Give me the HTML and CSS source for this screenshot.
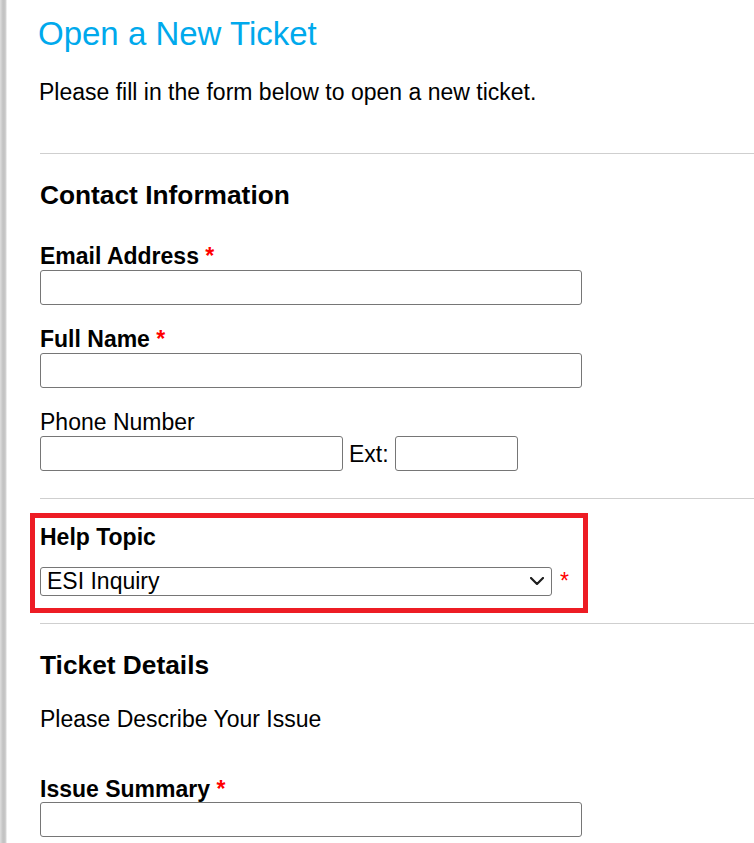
FILE: index.html
```html
<!DOCTYPE html>
<html lang="en">
<head>
<meta charset="utf-8">
<title>Open a New Ticket</title>
<link rel="stylesheet" href="styles.css">
</head>
<body>
<main class="page">
  <h1 class="title">Open a New Ticket</h1>
  <p class="intro">Please fill in the form below to open a new ticket.</p>
  <hr class="rule rule-first">

  <h3 class="section-title">Contact Information</h3>
  <div class="fields">
    <div class="field">
      <label class="label label-bold" for="email">Email Address <span class="req">*</span></label>
      <input class="input input-wide" id="email" type="text">
    </div>
    <div class="field">
      <label class="label label-bold" for="name">Full Name <span class="req">*</span></label>
      <input class="input input-wide" id="name" type="text">
    </div>
    <div class="field">
      <label class="label" for="phone">Phone Number</label>
      <div class="phone-row">
        <input class="input input-phone" id="phone" type="text">
        <label class="label ext-label" for="ext">Ext:</label>
        <input class="input input-ext" id="ext" type="text">
      </div>
    </div>
  </div>

  <hr class="rule rule-mid">

  <div class="topic-box">
    <label class="label label-bold topic-label" for="topic">Help Topic</label>
    <div class="topic-row">
      <div class="select-wrap">
        <select class="select" id="topic">
          <option>ESI Inquiry</option>
        </select>
        <svg class="chevron" width="14" height="8" viewBox="0 0 14 8" aria-hidden="true">
          <polyline points="1,1 7,7 13,1" fill="none" stroke="#1e1e1e" stroke-width="2.2" stroke-linecap="round" stroke-linejoin="round"/>
        </svg>
      </div>
      <span class="req req-select">*</span>
    </div>
  </div>

  <hr class="rule rule-after-topic">

  <h3 class="section-title section-details">Ticket Details</h3>
  <p class="describe">Please Describe Your Issue</p>

  <div class="field field-summary">
    <label class="label label-bold" for="summary">Issue Summary <span class="req">*</span></label>
    <input class="input input-wide" id="summary" type="text">
  </div>
</main>
</body>
</html>
```

FILE: styles.css
```css
html, body {
  margin: 0;
  padding: 0;
}

body {
  font-family: "Liberation Sans", Arial, sans-serif;
  font-size: 23px;
  color: #000;
  background-color: #fff;
  background-image: linear-gradient(to right, #dedede 0, #c2c2c2 3px, #c6c6c6 5px, #d8d8d8 6px, #fff 7px);
  background-repeat: no-repeat;
  background-size: 7px 100%;
  min-height: 100vh;
  overflow: hidden;
}

.page {
  padding: 15px 0 0 40px;
}

.title {
  margin: 0 0 0 -2px;
  font-size: 33px;
  line-height: 37px;
  font-weight: normal;
  color: #00a9ec;
}

.intro {
  margin: 27px 0 0 -1px;
  font-size: 23px;
  line-height: 26px;
}

.rule {
  margin: 0;
  height: 0;
  border: 0;
  border-top: 1px solid #cfcfcf;
}

.rule-first {
  margin-top: 48px;
}

.section-title {
  margin: 26px 0 0;
  font-size: 26.3px;
  line-height: 30px;
  font-weight: bold;
}

.fields {
  margin-top: 33px;
  display: flex;
  flex-direction: column;
  gap: 21px;
}

.field {
  display: flex;
  flex-direction: column;
  align-items: flex-start;
  gap: 1px;
}

.label {
  font-size: 23px;
  line-height: 26px;
}

.label-bold {
  font-weight: bold;
}

.req {
  color: #ff0000;
  font-weight: bold;
}

.req-select {
  font-size: 23px;
  line-height: 26px;
  font-weight: normal;
}

.input {
  box-sizing: border-box;
  height: 35px;
  margin: 0;
  padding: 0 6px;
  border: 1px solid #767676;
  border-radius: 3px;
  background: #fff;
  font-family: inherit;
  font-size: 20px;
}

.input-wide {
  width: 542px;
}

.phone-row {
  display: flex;
  align-items: center;
  gap: 6px;
}

.input-phone {
  width: 303px;
}

.input-ext {
  width: 123px;
}

.rule-mid {
  margin-top: 27px;
}

.topic-box {
  box-sizing: border-box;
  width: 558px;
  margin: 14px 0 0 -10px;
  padding: 6px 0 12px 5px;
  border: 5px solid #ed1c24;
}

.topic-label {
  display: block;
}

.topic-row {
  margin-top: 17px;
  display: flex;
  align-items: baseline;
  gap: 8px;
}

.select-wrap {
  position: relative;
  display: flex;
}

.select {
  -webkit-appearance: none;
  appearance: none;
  box-sizing: border-box;
  width: 512px;
  height: 29px;
  margin: 0;
  padding: 0 30px 0 6px;
  border: 1px solid #767676;
  border-radius: 3px;
  background: #fff;
  color: #000;
  font-family: inherit;
  font-size: 23px;
  line-height: 27px;
}

.chevron {
  position: absolute;
  right: 8px;
  top: 10px;
  pointer-events: none;
}

.rule-after-topic {
  margin-top: 10px;
}

.section-details {
  margin-top: 26px;
}

.describe {
  margin: 26px 0 0;
  font-size: 23px;
  line-height: 26px;
}

.field-summary {
  margin-top: 44px;
  gap: 0;
}
```
